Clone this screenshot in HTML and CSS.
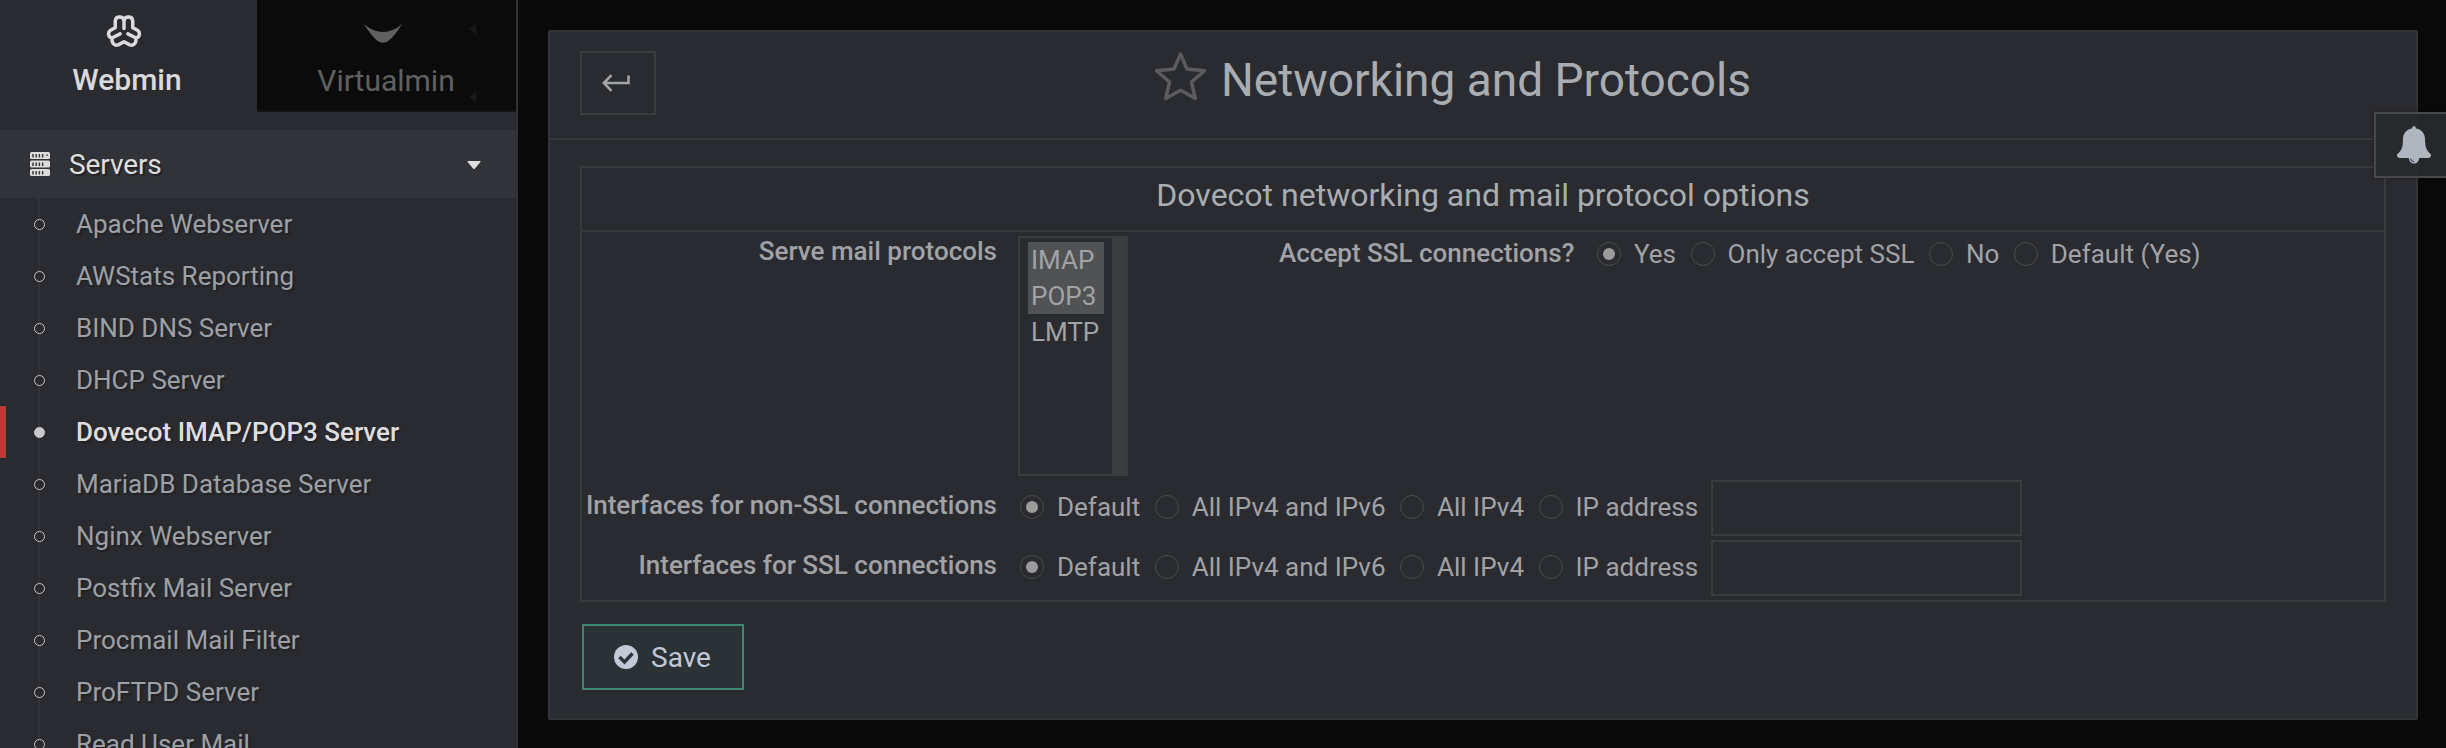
FILE: index.html
```
<!DOCTYPE html>
<html lang="en">
<head>
<meta charset="utf-8">
<title>Networking and Protocols</title>
<link rel="stylesheet" href="styles.css">
</head>
<body>
<aside class="sidebar">
  <div class="tabs">
    <div class="tab tab-active">
      <svg class="logo-webmin" viewBox="0 0 36 34" fill="none" stroke="currentColor" stroke-width="3.6" stroke-linecap="round" stroke-linejoin="round"><path d="M18 14V6C17.300 .8 9.500 .8 9 6V13L4.500 15.500C.5 18 2 23.500 6 23.500C4.500 28.500 8.500 32.500 12.500 30.500L18 27.500L23.500 30.500C27.500 32.500 31.500 28.500 30 23.500C34 23.500 35.500 18 31.500 15.500L27 13V6C26.500 .8 18.700 .8 18 6M6 23.500L14 19.500M30 23.500L22 19.500"/></svg>
      <span>Webmin</span>
    </div>
    <div class="tab tab-idle">
      <svg class="logo-virtualmin" viewBox="0 0 38 19" fill="currentColor"><path d="M0 0Q9 8 19 8Q29 8 38 0C33 8 29 13 25 16.500Q19 21 13 16.500C9 13 5 8 0 0Z"/></svg>
      <span>Virtualmin</span>
      <i class="notch notch-top"></i><i class="notch notch-bottom"></i>
    </div>
  </div>
  <div class="group">
    <svg class="server-icon" viewBox="0 0 20 24"><g fill="#dcdcdc"><rect width="20" height="7" rx="1.500"/><rect y="8.500" width="20" height="7" rx="1.500"/><rect y="17" width="20" height="7" rx="1.500"/></g><path d="M3 2v3.500M6.200 2v3.500M9.400 2v3.500M12.600 2v3.500M3 10.500V14M6.200 10.500V14M9.400 10.500V14M12.600 10.500V14M3 19v3.500M6.200 19v3.500M9.400 19v3.500M12.600 19v3.500M17 2.500v1.500" stroke="#323338" stroke-width="1.400"/></svg>
    <span class="group-name">Servers</span>
    <svg class="caret" viewBox="0 0 14 8"><path d="M1 0h12q1 0 .4 1L8 7.500q-1 1-2 0L.6 1Q0 0 1 0Z" fill="#dedede"/></svg>
  </div>
  <ul class="menu">
    <li>Apache Webserver</li>
    <li>AWStats Reporting</li>
    <li>BIND DNS Server</li>
    <li>DHCP Server</li>
    <li class="current">Dovecot IMAP/POP3 Server</li>
    <li>MariaDB Database Server</li>
    <li>Nginx Webserver</li>
    <li>Postfix Mail Server</li>
    <li>Procmail Mail Filter</li>
    <li>ProFTPD Server</li>
    <li>Read User Mail</li>
  </ul>
</aside>
<main class="panel">
  <header class="panel-head">
    <button class="back" aria-label="Return"><svg viewBox="0 0 28 18" fill="none" stroke="currentColor" stroke-width="2.600"><path d="M26.500 1.500V9H2M9.500 1.200L1.800 9L9.500 16.800"/></svg></button>
    <h1 class="title"><svg class="star" viewBox="0 0 53 50" fill="none" stroke="#5b5c60" stroke-width="3.400" stroke-linejoin="round"><path d="M26.500 3L33 18L50.500 19.800L37.500 31L41.300 47.500L26.500 39.300L11.700 47.500L15.500 31L2.500 19.800L20 18Z"/></svg><span>Networking and Protocols</span></h1>
  </header>
  <section class="box">
    <h2 class="box-title">Dovecot networking and mail protocol options</h2>
    <div class="row row-top">
      <div class="label">Serve mail protocols</div>
      <div class="list"><div class="options"><div class="option on">IMAP</div><div class="option on">POP3</div><div class="option">LMTP</div></div><div class="track"></div></div>
      <div class="ssl">
        <div class="ssl-label">Accept SSL connections?</div>
        <div class="radios"><i class="radio checked"></i><span>Yes</span><i class="radio"></i><span>Only accept SSL</span><i class="radio"></i><span>No</span><i class="radio"></i><span>Default (Yes)</span></div>
      </div>
    </div>
    <div class="row">
      <div class="label">Interfaces for non-SSL connections</div>
      <div class="radios"><i class="radio checked"></i><span>Default</span><i class="radio"></i><span>All IPv4 and IPv6</span><i class="radio"></i><span>All IPv4</span><i class="radio"></i><span>IP address</span></div>
      <input class="address" aria-label="Non-SSL IP address">
    </div>
    <div class="row">
      <div class="label">Interfaces for SSL connections</div>
      <div class="radios"><i class="radio checked"></i><span>Default</span><i class="radio"></i><span>All IPv4 and IPv6</span><i class="radio"></i><span>All IPv4</span><i class="radio"></i><span>IP address</span></div>
      <input class="address" aria-label="SSL IP address">
    </div>
  </section>
  <button class="save"><svg viewBox="0 0 24 24"><circle cx="12" cy="12" r="12" fill="currentColor"/><path d="M5.500 12L10.500 17L18.500 8.500" fill="none" stroke="#2c3336" stroke-width="3.400"/></svg><span>Save</span></button>
</main>
<div class="bell"><svg viewBox="0 0 34 38"><path d="M17 0q2 0 2 2.500C25 3.500 28 8 28 13C28 22 30 25 34 28.500Q34.500 31.500 31.500 32H22.200A5.200 5.500 0 0 1 11.800 32H2.500Q-.5 31.500 0 28.500C4 25 6 22 6 13C6 8 9 3.500 15 2.500Q15 0 17 0Z" fill="#b0b6c0"/><path d="M13.500 32.500q.5 3 3.500 3.300" fill="none" stroke="#2a2c30" stroke-width="1"/></svg></div>
</body>
</html>
```

FILE: styles.css
```
*, *::before, *::after { box-sizing: border-box; }
body {
  margin: 0;
  width: 2446px;
  height: 748px;
  overflow: hidden;
  display: flex;
  align-items: flex-start;
  position: relative;
  background: #090909;
  color: #a1a2a6;
  font-family: Roboto, "Liberation Sans", sans-serif;
  font-size: 26px;
}
h1, h2, ul { margin: 0; padding: 0; font-weight: 400; }
svg { display: block; flex: none; }
button { font: inherit; padding: 0; }

.sidebar {
  width: 518px;
  height: 748px;
  overflow: hidden;
  background: #2a2b30;
  border-right: 2px solid #313237;
}
.tabs { display: flex; height: 112px; margin-bottom: 18px; font-size: 30px; line-height: 36px; }
.tab { display: flex; flex-direction: column; align-items: center; position: relative; }
.tab-active { width: 257px; padding: 15px 3px 0 0; font-weight: 500; color: #d9dad9; }
.tab-idle { width: 259px; padding: 24px 1px 0 0; background: #0b0b0b; border-bottom: 2px solid #131314; color: #606060; }
.logo-webmin { width: 36px; height: 33px; margin-bottom: 14px; margin-right: 7px; }
.logo-virtualmin { width: 38px; height: 19px; margin-bottom: 20px; margin-right: 6px; }
.notch { position: absolute; left: 212px; border: 6px solid transparent; border-left: 0; border-right: 7px solid #161817; }
.notch-top { top: 23px; }
.notch-bottom { top: 91px; }

.group {
  display: flex;
  align-items: center;
  height: 68px;
  padding: 0 35px 0 30px;
  background: #323338;
  font-size: 28px;
  color: #dedede;
  text-shadow: 2px 2px 1px #222327;
}
.server-icon { width: 20px; height: 24px; }
.group-name { flex: 1; padding-left: 19px; letter-spacing: -.1px; }
.caret { width: 14px; height: 8px; margin-top: 2px; }

.menu {
  list-style: none;
  background: linear-gradient(#323338, #323338) 38px 0 / 2px 100% no-repeat;
  text-shadow: 2px 2px 1px #222327;
}
.menu li { display: flex; align-items: center; height: 52px; padding-left: 34px; gap: 31px; color: #9da0a4; }
.menu li::before { content: ""; flex: none; width: 11px; height: 11px; border: 1.500px solid #c6c6c6; border-radius: 50%; background: #2a2b30; }
.menu li.current { box-shadow: inset 6px 0 #b83d33; color: #dedede; font-weight: 500; }
.menu li.current::before { border-color: #c9c9c9; background: #c9c9c9; }

.panel {
  width: 1870px;
  height: 690px;
  margin: 30px 0 0 30px;
  background: #2a2b30;
  border: 2px solid #323337;
  border-radius: 2px;
}
.panel-head { display: flex; align-items: flex-start; height: 108px; padding: 19px 30px; border-bottom: 2px solid #36373b; }
.back { display: flex; align-items: center; justify-content: center; width: 76px; height: 64px; padding-right: 5px; background: none; border: 2px solid #3a3b3f; color: #a3a4a8; }
.back svg { width: 28px; height: 18px; }
.title { flex: 1; display: flex; justify-content: center; gap: 14px; padding-right: 137px; font-size: 46px; line-height: 58px; color: #a9adb1; }
.star { width: 53px; height: 50px; }

.box { width: 1806px; height: 436px; margin: 26px 0 22px 30px; border: 2px solid #38393d; }
.box-title { height: 64px; border-bottom: 2px solid #36373b; text-align: center; font-size: 32px; line-height: 54px; color: #a9adb1; }
.row { display: flex; align-items: flex-start; height: 60px; padding-top: 2px; line-height: 36px; white-space: nowrap; }
.row-top { height: 246px; padding-top: 4px; }
.label { width: 415px; margin-right: 23px; padding-top: 7px; text-align: right; font-weight: 500; }
.row-top .label { margin: -3px 21px 0 0; padding-top: 0; }
.radios { display: flex; align-items: center; padding-top: 9px; }
.radios span { margin: 0 14.5px 0 13px; }
.radio { display: flex; flex: none; width: 24px; height: 24px; border: 1.500px solid #4a4b4e; border-radius: 50%; }
.radio.checked::after { content: ""; margin: auto; width: 12px; height: 12px; border-radius: 50%; background: #9b9b9b; }
.list { display: flex; width: 110px; height: 240px; border: 2px solid #3a3b3e; }
.options { width: 92px; padding: 4px 8px; }
.option { height: 36px; padding-left: 3px; line-height: 36px; }
.on { background: #515253; }
.track { flex: 1; background: #3c3d40; }
.ssl { display: flex; margin-left: 151px; }
.ssl-label { width: 296px; margin: -1px 22px 0 0; font-weight: 500; }
.ssl .radios { height: 36px; padding: 0; }
.address { width: 311px; height: 56px; margin: 0 0 0 -2px; background: transparent; border: 2px solid #3a3b3e; border-radius: 0; }

.save { display: flex; align-items: center; width: 162px; height: 66px; margin-left: 32px; padding-left: 30px; gap: 13px; background: #2b3236; border: 2px solid #3b886e; color: #c2c8d6; font-size: 28px; }
.save svg { width: 24px; height: 24px; }
.bell { position: absolute; left: 2374px; top: 112px; width: 72px; height: 66px; padding: 12px 0 0 21px; background: rgba(41, 42, 46, .93); border: 2px solid #46484c; border-right: 0; box-shadow: 0 0 4px rgba(0, 0, 0, .3); }
.bell svg { width: 34px; height: 38px; }
```
